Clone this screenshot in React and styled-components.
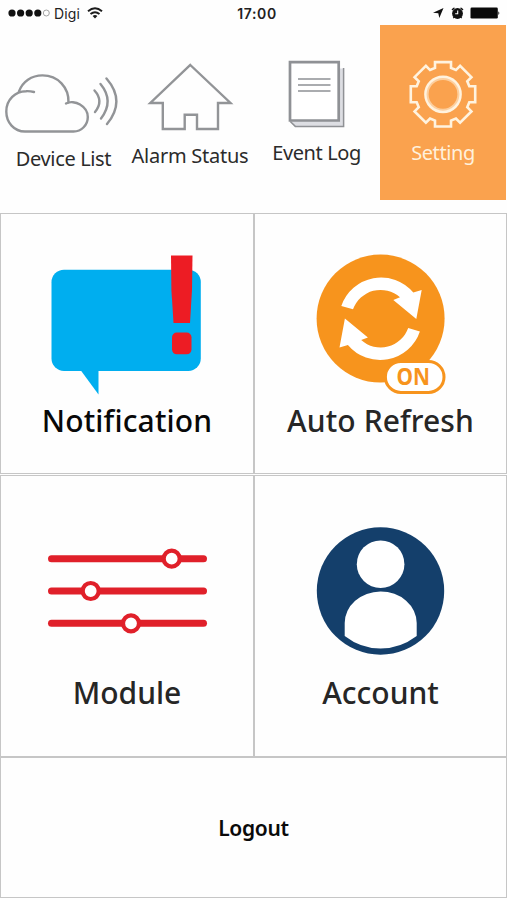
import React from 'react';
import styled, { createGlobalStyle } from 'styled-components';

const GlobalStyle = createGlobalStyle`
  body {
    margin: 0;
    background: #fefefe;
  }
`;

const Screen = styled.div`
  display: flex;
  flex-direction: column;
  width: 507px;
  height: 900px;
  overflow: hidden;
  background: #fefefe;
  font-family: 'Noto Sans', 'Open Sans', sans-serif;
`;

const StatusBar = styled.header`
  display: grid;
  grid-template-columns: 1fr auto 1fr;
  align-items: center;
  height: 25px;
  padding: 1px 7px 0 8px;
  box-sizing: border-box;
  font-family: Inter, Roboto, sans-serif;
  font-size: 14px;
  color: #222;
`;

const StatusGroup = styled.div`
  display: flex;
  align-items: center;
  justify-content: ${(props) => (props.$end ? 'flex-end' : 'flex-start')};
`;

const Carrier = styled.span`
  margin: 0 7px 0 3px;
  letter-spacing: 0.1px;
`;

const Clock = styled.span`
  padding-left: 6px;
  font-weight: 600;
  letter-spacing: 0.6px;
`;

const Nav = styled.nav`
  display: grid;
  grid-template-columns: 127px 126px 127px 126px;
  height: 188px;
`;

const Tab = styled.div`
  display: flex;
  flex-direction: column;
  align-items: center;
  height: 175px;
  color: ${(props) => (props.$active ? '#fff1dc' : '#2b2b2b')};
  background: ${(props) => (props.$active ? '#faa24e' : 'transparent')};
`;

const TabLabel = styled.span`
  padding-top: 1px;
  font-size: 20px;
  line-height: 28px;
  white-space: nowrap;
  letter-spacing: ${(props) => props.$spacing}px;
`;

const TileRow = styled.div`
  display: grid;
  grid-template-columns: 254px 253px;
  height: ${(props) => props.$height}px;
  margin-bottom: ${(props) => props.$gap || 0}px;
`;

const Tile = styled.div`
  display: flex;
  flex-direction: column;
  align-items: center;
  border: 1px solid #c6c6c6;
`;

const TileLabel = styled.span`
  padding-top: 1px;
  font-size: 30px;
  font-weight: 500;
  line-height: 40px;
  white-space: nowrap;
  color: ${(props) => props.$color || '#262626'};
  letter-spacing: ${(props) => props.$spacing}px;
`;

const LogoutButton = styled.button`
  display: flex;
  align-items: center;
  justify-content: center;
  height: 141px;
  padding: 1px 0 0;
  border: 1px solid #c6c6c6;
  background: transparent;
  font: 600 21px 'Noto Sans', sans-serif;
  letter-spacing: -0.3px;
  color: #0a0a0a;
`;

const Art = styled.svg`
  display: block;
  flex: none;
`;

const SignalDots = () => (
  <Art width="43" height="10" viewBox="8 8 43 10">
    {[12, 20.6, 29.2, 37.8].map((x) => (
      <circle key={x} cx={x} cy="13" r="3.6" fill="#111" />
    ))}
    <circle cx="46.3" cy="13" r="3" fill="none" stroke="#999" strokeWidth="0.9" />
  </Art>
);

const WifiIcon = () => (
  <Art width="16" height="12" viewBox="0 0 16 12" fill="none" stroke="#1c1c1c" strokeWidth="1.9">
    <path d="M1 4.3 Q8 -1.7 15 4.3" />
    <path d="M3.5 7.1 Q8 3.3 12.5 7.1" />
    <path d="M8 11.5 L5.6 9 Q8 7.2 10.4 9 Z" fill="#1c1c1c" stroke="none" />
  </Art>
);

const StatusIcons = () => (
  <Art width="68" height="16" viewBox="432 5 68 16">
    <path d="M443.5 8 L439.3 18 L438.3 13.3 L433 12.7 Z" fill="#111" />
    <circle cx="457.5" cy="13.5" r="5.4" fill="#111" />
    <path d="M452.4 9.6 L454 8.2 M462.6 9.6 L461 8.2" stroke="#111" strokeWidth="1.4" strokeLinecap="round" />
    <path d="M454.2 17 L453.3 18.2 M460.8 17 L461.7 18.2" stroke="#111" strokeWidth="1.2" />
    <path d="M457.7 10.6 V13.7 H455.2" fill="none" stroke="#fff" strokeWidth="1.1" />
    <rect x="470.5" y="7.6" width="27.3" height="11" rx="1.3" fill="#0a0a0a" />
    <path d="M498.4 11.2 Q500.2 13.1 498.4 15 Z" fill="#0a0a0a" />
  </Art>
);

const CloudIcon = () => (
  <Art width="127" height="119" viewBox="0 25 127 119" fill="none" stroke="#929497" strokeWidth="2.4" strokeLinecap="round">
    <path d="M66 103.5 C70 101.2 76 102 80 104.5 C85 107.5 87.8 112 87.8 117 C87.8 125 81.5 131.5 73.5 131.5 H25 C14 131.5 6.3 122.5 6.3 111.5 C6.3 99.5 15.5 91.3 26 91.2 Q30 91 34 92" />
    <path d="M19 91.5 C22.5 81.5 31.5 75.4 42.5 75.4 C58 75.4 69 87.5 68.5 102.5" />
    <path d="M94.5 90.5 Q104 101 95 112" />
    <path d="M100.5 84 Q114.5 101 101 118.5" />
    <path d="M106.5 78.5 Q126 101 107 124" />
  </Art>
);

const HouseIcon = () => (
  <Art width="126" height="116" viewBox="127 25 126 116" fill="none" stroke="#929497" strokeWidth="2.4">
    <path d="M190.3 65 L230.5 103 H218 V129 H197 V114.8 H184.7 V129 H162.8 V103 H150.3 Z" />
  </Art>
);

const BookIcon = () => (
  <Art width="127" height="113" viewBox="253 25 127 113" stroke="#8f9195">
    <path d="M339.5 68.5 H344 V126.6 H295.5 L290 121 H339.5 Z" fill="#dddee3" stroke="none" />
    <path d="M343.6 68 V126.4 H295.3 L290.3 121.5" fill="none" strokeWidth="1.5" />
    <path d="M290 62.2 H338.7 V120.5 H290 Z" fill="#fff" strokeWidth="2.7" />
    <path d="M298 79 H330.5 M298 85 H330.5 M298 91 H330.5" strokeWidth="1.7" />
  </Art>
);

// one tooth is repeated every 45 degrees round the hub
const gearPoints = () => {
  const tooth = [[-8, -26.3], [-8, -32.2], [8, -32.2], [8, -26.3]];
  const points = [];
  for (let i = 0; i < 8; i++) {
    const a = (i * Math.PI) / 4;
    tooth.forEach(([x, y]) => {
      const px = x * Math.cos(a) - y * Math.sin(a);
      const py = x * Math.sin(a) + y * Math.cos(a);
      points.push(`${px.toFixed(2)},${py.toFixed(2)}`);
    });
  }
  return points.join(' ');
};

const GearIcon = () => (
  <Art width="126" height="113" viewBox="380 25 126 113">
    <g transform="translate(443 94.3)" fill="none" stroke="#fff3df">
      <polygon points={gearPoints()} strokeWidth="2.6" />
      <circle r="15.6" stroke="#fdcf9e" strokeWidth="2.4" />
      <circle r="17.6" strokeWidth="2.5" />
    </g>
  </Art>
);

const NotificationIcon = () => (
  <Art width="252" height="186" viewBox="1 214 252 186">
    <rect x="51.5" y="269.7" width="149.3" height="101.3" rx="12.5" fill="#00aeef" />
    <path d="M80.5 370 H98.5 V394.5 Z" fill="#00aeef" />
    <path d="M171 255.5 H192.5 L192 290 L190 323 H173.5 L171.4 290 Z" fill="#ed1c24" />
    <rect x="172" y="332.5" width="19.5" height="21.8" rx="4.8" fill="#ed1c24" />
  </Art>
);

const arrow =
  'M341.3 306 A42 42 0 0 1 413.3 292.5 L421.7 290 L416.3 319 L393.3 300 L400 297.3 A29.3 29.3 0 0 0 353 309.3 Z';

const RefreshIcon = () => (
  <Art width="251" height="186" viewBox="255 214 251 186">
    <circle cx="380.6" cy="318.6" r="64" fill="#f7941d" />
    <path d={arrow} fill="#fff" />
    <path d={arrow} fill="#fff" transform="rotate(180 380.6 318.7)" />
    <rect x="385.4" y="361.4" width="58.6" height="31" rx="15.5" fill="#fff" stroke="#f7941d" strokeWidth="3" />
    <text
      x="396.5"
      y="384.7"
      textLength="33.5"
      lengthAdjust="spacingAndGlyphs"
      fontSize="23.5"
      fontWeight="700"
      fill="#f7941d"
    >
      ON
    </text>
  </Art>
);

const SlidersIcon = () => (
  <Art width="252" height="196" viewBox="1 476 252 196" stroke="#e0202a">
    {[[558.7, 171.7], [591, 90.7], [623.3, 131]].map(([y, knob]) => (
      <g key={y}>
        <path d={`M51.5 ${y} H203.5`} strokeWidth="7" strokeLinecap="round" />
        <circle cx={knob} cy={y} r="8" fill="#fff" strokeWidth="4.2" />
      </g>
    ))}
  </Art>
);

const AccountIcon = () => (
  <Art width="251" height="196" viewBox="255 476 251 196">
    <circle cx="380.5" cy="591" r="63.7" fill="#143f6b" />
    <circle cx="380.6" cy="564.2" r="23.8" fill="#fff" />
    <path d="M344.7 636 V623 A36 31.5 0 0 1 380.5 591.5 A36 31.5 0 0 1 416.7 623 V636 Q400 648.6 380.5 648.6 Q361 648.6 344.7 636 Z" fill="#fff" />
  </Art>
);

const App = () => {
  return (
    <Screen>
      <GlobalStyle />
      <StatusBar>
        <StatusGroup>
          <SignalDots />
          <Carrier>Digi</Carrier>
          <WifiIcon />
        </StatusGroup>
        <Clock>17:00</Clock>
        <StatusGroup $end>
          <StatusIcons />
        </StatusGroup>
      </StatusBar>
      <Nav>
        <Tab>
          <CloudIcon />
          <TabLabel $spacing={-0.35}>Device List</TabLabel>
        </Tab>
        <Tab>
          <HouseIcon />
          <TabLabel $spacing={-0.25}>Alarm Status</TabLabel>
        </Tab>
        <Tab>
          <BookIcon />
          <TabLabel $spacing={-0.4}>Event Log</TabLabel>
        </Tab>
        <Tab $active>
          <GearIcon />
          <TabLabel $spacing={-0.4}>Setting</TabLabel>
        </Tab>
      </Nav>
      <TileRow $height={261} $gap={1}>
        <Tile>
          <NotificationIcon />
          <TileLabel $color="#080808" $spacing={0.15}>Notification</TileLabel>
        </Tile>
        <Tile>
          <RefreshIcon />
          <TileLabel $spacing={0.1}>Auto Refresh</TileLabel>
        </Tile>
      </TileRow>
      <TileRow $height={282}>
        <Tile>
          <SlidersIcon />
          <TileLabel $spacing={0}>Module</TileLabel>
        </Tile>
        <Tile>
          <AccountIcon />
          <TileLabel $spacing={0}>Account</TileLabel>
        </Tile>
      </TileRow>
      <LogoutButton>Logout</LogoutButton>
    </Screen>
  );
};

export default App;
